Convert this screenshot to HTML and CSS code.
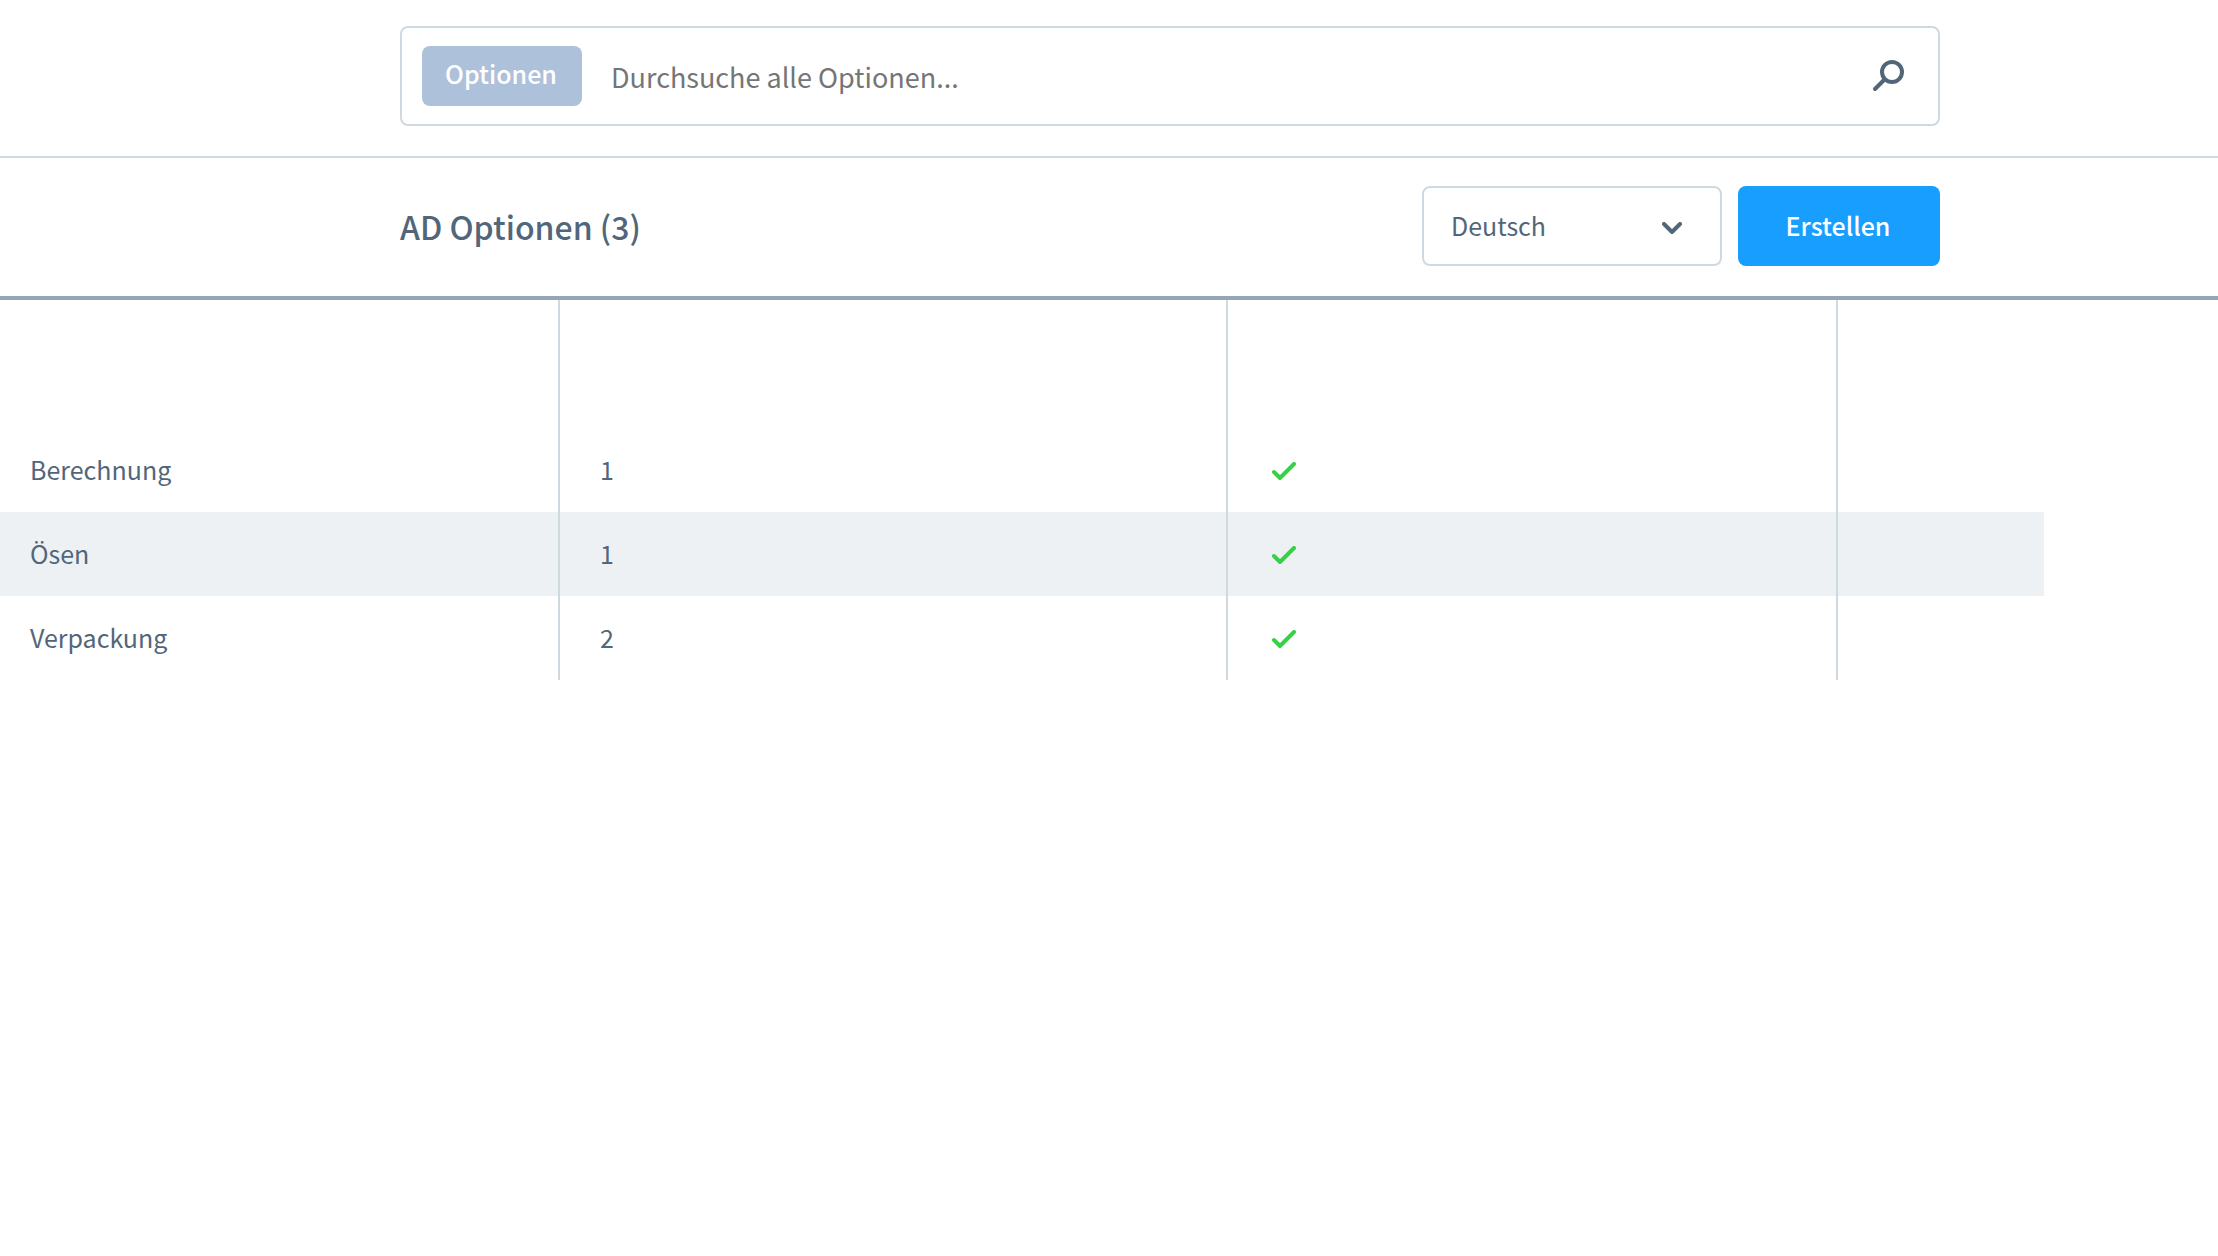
FILE: index.html
```html
<!DOCTYPE html>
<html lang="de">
<head>
<meta charset="utf-8">
<meta name="viewport" content="width=device-width, initial-scale=1">
<title>AD Optionen</title>
<link rel="stylesheet" href="styles.css">
</head>
<body>
<header class="search-bar">
  <form class="search" role="search">
    <button class="search-type" type="button">Optionen</button>
    <input class="search-input" type="text" aria-label="Suche" placeholder="Durchsuche alle Optionen...">
    <button class="search-submit" type="submit" aria-label="Suchen">
      <svg width="32" height="32" viewBox="0 0 32 32" fill="none" stroke="currentColor" stroke-width="4" stroke-linecap="round"><circle cx="20" cy="12" r="10"/><path d="M12.500 19.500L3 29"/></svg>
    </button>
  </form>
</header>
<main>
  <div class="toolbar">
    <h1 class="title">AD Optionen (3)</h1>
    <div class="language">
      <select class="language-select" aria-label="Sprache">
        <option>Deutsch</option>
        <option>English</option>
      </select>
      <svg class="language-arrow" width="20" height="12" viewBox="0 0 20 12" fill="none" stroke="currentColor" stroke-width="4" stroke-linecap="round" stroke-linejoin="round"><path d="M2 2l8 8 8-8"/></svg>
    </div>
    <button class="create" type="button">Erstellen</button>
  </div>
  <table class="grid">
    <colgroup><col class="col-name"><col class="col-position"><col class="col-filter"><col class="col-actions"></colgroup>
    <thead><tr><th></th><th></th><th></th><th></th></tr></thead>
    <tbody>
      <tr><td>Berechnung</td><td>1</td><td><svg class="check" viewBox="0 0 24 18"><path d="M2 10l6 6L22 2"/></svg></td><td></td></tr>
      <tr><td>Ösen</td><td>1</td><td><svg class="check" viewBox="0 0 24 18"><path d="M2 10l6 6L22 2"/></svg></td><td></td></tr>
      <tr><td>Verpackung</td><td>2</td><td><svg class="check" viewBox="0 0 24 18"><path d="M2 10l6 6L22 2"/></svg></td><td></td></tr>
    </tbody>
  </table>
</main>
</body>
</html>
```
FILE: styles.css
```css
* {
  box-sizing: border-box;
}

body {
  margin: 0;
  background: #fff;
  color: #52667a;
  font: 25px/36px "Noto Sans CJK SC", "Noto Sans", sans-serif;
}

button,
input,
select {
  margin: 0;
  font: inherit;
  color: inherit;
}

svg {
  display: block;
}

.search-bar {
  padding: 26px 278px 30px 400px;
  border-bottom: 2px solid #cfd9e0;
}

.search {
  display: flex;
  align-items: center;
  height: 100px;
  padding: 0 20px;
  border: 2px solid #cfd9e0;
  border-radius: 8px;
}

.search-type {
  width: 160px;
  height: 60px;
  padding: 0 2px 6px 0;
  border: 0;
  border-radius: 8px;
  background: #aec1da;
  color: #fff;
  font-weight: 500;
}

.search-input {
  flex: 1;
  min-width: 0;
  height: 60px;
  padding: 0 29px;
  border: 0;
  background: none;
  font-size: 27px;
}

.search-input::placeholder {
  color: #757575;
  opacity: 1;
}

.search-submit {
  padding: 0 14px;
  border: 0;
  background: none;
}

.toolbar {
  display: flex;
  align-items: center;
  gap: 16px;
  padding: 28px 278px 30px 400px;
  border-bottom: 4px solid #94a6b5;
}

.title {
  flex: 1;
  margin: 0;
  font-size: 32px;
  font-weight: 500;
}

.language {
  display: grid;
  align-items: center;
  width: 300px;
}

.language-select {
  grid-area: 1 / 1;
  width: 100%;
  height: 80px;
  padding: 0 60px 2px 27px;
  border: 2px solid #cfd9e0;
  border-radius: 8px;
  background: #fff;
  appearance: none;
}

.language-arrow {
  grid-area: 1 / 1;
  justify-self: end;
  margin: 4px 40px 0 0;
  pointer-events: none;
}

.create {
  width: 202px;
  height: 80px;
  padding: 0 2px 2px 0;
  border: 0;
  border-radius: 8px;
  background: #189eff;
  color: #fff;
  font-weight: 500;
}

.grid {
  width: calc(100% - 174px);
  border-spacing: 0;
  table-layout: fixed;
}

.col-name {
  width: 560px;
}

.col-position {
  width: 668px;
}

.col-filter {
  width: 610px;
}

.grid th {
  height: 128px;
}

.grid td {
  height: 84px;
  padding: 0 40px 2px;
}

.grid td:first-child {
  padding-left: 30px;
}

.grid th:not(:last-child),
.grid td:not(:last-child) {
  border-right: 2px solid #cfd9e0;
}

.grid tbody tr:nth-child(even) {
  background: #edf1f4;
}

.check {
  width: 24px;
  height: 18px;
  margin: 4px 0 0 4px;
  fill: none;
  stroke: #37d046;
  stroke-width: 4;
  stroke-linecap: round;
  stroke-linejoin: round;
}
```
